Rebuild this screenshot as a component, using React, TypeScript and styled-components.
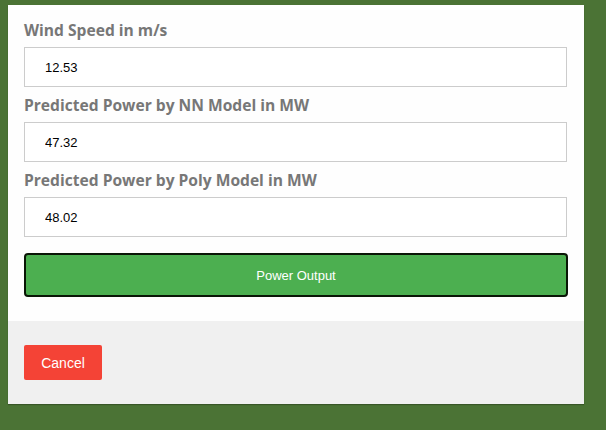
import React from "react";
import styled, { createGlobalStyle } from "styled-components";

const Global = createGlobalStyle`
  html, body { margin: 0; padding: 0; }
  body { background: #4b7335; width: 606px; height: 430px; overflow: hidden; font-family: Arial, "Liberation Sans", sans-serif; }
`;

const Page = styled.div`
  padding: 5px 22px 0 8px;
`;

const Modal = styled.div`
  width: 576px;
  background: #fefefe;
  box-shadow: 0 1px 1px rgba(0,0,0,0.25);
  display: flex;
  flex-direction: column;
`;

const Body = styled.div`
  padding: 15px 16px 24px 16px;
  display: flex;
  flex-direction: column;
`;

const Label = styled.label<{ $first?: boolean }>`
  display: block;
  font-family: "Open Sans", sans-serif;
  font-weight: 700;
  font-size: 15.6px;
  line-height: 20px;
  color: #777;
  margin: ${(p) => (p.$first ? "0" : "8px")} 0 7px 0;
`;

const Field = styled.input`
  box-sizing: border-box;
  width: 543px;
  height: 40px;
  border: 1px solid #ccc;
  background: #fff;
  padding: 0 0 0 20px;
  font-family: "Liberation Sans", Arial, sans-serif;
  font-size: 13px;
  color: #000;
  outline: none;
`;

const SubmitButton = styled.button`
  box-sizing: border-box;
  margin-top: 16px;
  width: 544px;
  height: 44px;
  background: #4caf50;
  border: 2px solid #0a1606;
  border-radius: 4px;
  color: #fff;
  font-family: "Liberation Sans", Arial, sans-serif;
  font-size: 13px;
  cursor: pointer;
`;

const Footer = styled.div`
  background: #f0f0f0;
  padding: 24px 16px 24px 16px;
  display: flex;
`;

const CancelButton = styled.button`
  box-sizing: border-box;
  width: 78px;
  height: 35px;
  background: #f44336;
  border: none;
  border-radius: 2px;
  color: #fff;
  font-family: "Liberation Sans", Arial, sans-serif;
  font-size: 14px;
  cursor: pointer;
`;

export default function App() {
  return (
    <>
      <Global />
      <Page>
        <Modal>
          <Body>
            <Label $first>Wind Speed in m/s</Label>
            <Field defaultValue="12.53" />
            <Label>Predicted Power by NN Model in MW</Label>
            <Field defaultValue="47.32" />
            <Label>Predicted Power by Poly Model in MW</Label>
            <Field defaultValue="48.02" />
            <SubmitButton>Power Output</SubmitButton>
          </Body>
          <Footer>
            <CancelButton>Cancel</CancelButton>
          </Footer>
        </Modal>
      </Page>
    </>
  );
}
